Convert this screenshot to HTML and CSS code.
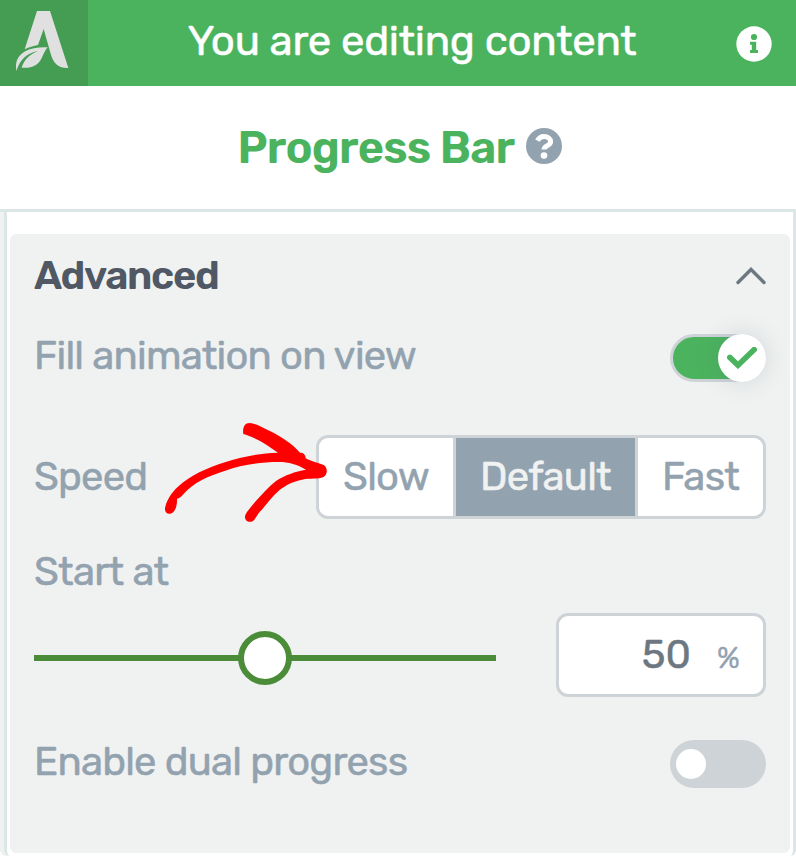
FILE: index.html
```html
<!DOCTYPE html>
<html lang="en">
<head>
  <meta charset="utf-8">
  <title>Progress Bar</title>
  <link rel="stylesheet" href="styles.css">
</head>
<body>
  <div class="header">
    <div class="logo">
      <svg width="88" height="86" viewBox="0 0 264 258" fill="#e0e0e0">
        <path d="M111 33H150L205 204C176 205 160 190 152 161L131 87L114 135C100 138 87 141 74 148Z"/>
        <path d="M49 213C45 184 53 168 73 155C93 144 117 141 143 142C135 151 131 162 125 174C114 198 92 206 65 203C72 180 86 165 114 153C80 160 60 178 49 213Z"/>
      </svg>
    </div>
    <div class="header-title"><span>You are editing content</span></div>
    <svg class="info" width="36" height="36" viewBox="0 0 36 36">
      <circle cx="18" cy="18" r="17.7" fill="#fff"/>
      <circle cx="18" cy="11" r="3.1" fill="#4bb35e"/>
      <path d="M14 15.7h6.2v8.2H22v3h-8v-3h1.8v-5.2H14z" fill="#4bb35e"/>
    </svg>
  </div>

  <div class="title">
    <h1>Progress Bar</h1>
    <svg width="36" height="36" viewBox="0 0 36 36">
      <circle cx="18" cy="18" r="18" fill="#93a2af"/>
      <path d="M11.4 12.6C12.8 9.8 15.1 8.4 18 8.4C21.6 8.4 24.6 10.6 24.6 13.7C24.6 17.8 18 17.4 18 21.6" fill="none" stroke="#fff" stroke-width="5"/>
      <circle cx="18" cy="27.5" r="3.3" fill="#fff"/>
    </svg>
  </div>

  <div class="panel">
    <div class="section">
      <div class="section-head">
        <h2>Advanced</h2>
        <svg width="32" height="20" viewBox="0 0 32 20">
          <path d="M3 16.5L16 3.5L29 16.5" fill="none" stroke="#6d7782" stroke-width="3.4" stroke-linecap="round"/>
        </svg>
      </div>

      <div class="row row-fill">
        <span class="label label-fill">Fill animation on view</span>
        <div class="toggle on">
          <div class="knob">
            <svg width="30" height="22" viewBox="0 0 30 22">
              <path d="M2.8 10.4L11 18.2L27.2 2.6" fill="none" stroke="#4bb35e" stroke-width="5.6" stroke-linecap="round"/>
            </svg>
          </div>
        </div>
      </div>

      <div class="row row-speed">
        <span class="label label-speed">Speed</span>
        <div class="button-group">
          <div class="option slow"><span>Slow</span></div>
          <div class="option default active"><span>Default</span></div>
          <div class="option fast"><span>Fast</span></div>
        </div>
        <svg class="arrow" width="200" height="130" viewBox="0 0 600 390" fill="#f00">
          <path d="M280 72C277 54 283 39 299 39C318 40 336 52 355 61C392 79 428 102 450 128C461 127 467 135 467 145C487 155 509 160 522 166C534 174 533 195 519 202C506 208 482 204 456 209C430 214 405 226 388 241C366 260 351 282 334 301C323 309 317 331 304 335C290 338 282 326 286 315C293 300 305 290 315 276C337 253 355 230 379 212C405 196 435 184 468 179C443 164 416 156 386 156C329 156 274 165 226 182C177 197 129 218 100 253C94 261 88 265 81 266C82 284 77 307 61 311C49 313 42 302 46 290C51 270 65 247 83 231C121 196 170 174 227 156C278 140 330 129 384 128C355 108 319 83 280 72Z"/>
        </svg>
      </div>

      <div class="label label-start">Start at</div>

      <div class="row row-start">
        <div class="slider"><div class="handle"></div></div>
        <div class="number"><span class="value">50</span><span class="unit">%</span></div>
      </div>

      <div class="row row-dual">
        <span class="label label-dual">Enable dual progress</span>
        <div class="toggle"><div class="knob"></div></div>
      </div>
    </div>
  </div>
</body>
</html>
```
FILE: styles.css
```css
* {
  box-sizing: border-box;
}

body {
  margin: 0;
  height: 856px;
  overflow: hidden;
  font-family: Rubik, Roboto, sans-serif;
  font-size: 40px;
  line-height: 48px;
  letter-spacing: -0.8px;
  -webkit-text-stroke: 0.5px;
  color: #93a2af;
  background: #fff;
}

svg {
  display: block;
  flex: none;
}

h1, h2 {
  margin: 0;
  font-weight: 600;
  white-space: nowrap;
  -webkit-text-stroke: 0;
}

.header {
  display: flex;
  align-items: center;
  height: 86px;
  padding-right: 24px;
  background: #4bb35e;
  color: #fff;
}

.logo {
  width: 88px;
  height: 86px;
  background: #459d53;
}

.header-title {
  flex: 1;
  padding-bottom: 4px;
  text-align: center;
  font-size: 42px;
  letter-spacing: -0.3px;
  white-space: nowrap;
}

.info {
  margin-top: 2px;
}

.title {
  display: flex;
  align-items: center;
  justify-content: center;
  gap: 12px;
  height: 126px;
  padding: 0 0 3px 4px;
  border-bottom: 3px solid #dce6e7;
}

.title h1 {
  padding-top: 4px;
  font-size: 45px;
  letter-spacing: -0.75px;
  color: #4bb35e;
}

.panel {
  height: 644px;
  padding: 22px 3px 3px;
  border: 3px solid #dce6e7;
  border-width: 0 3px;
  border-radius: 0 0 6px 6px;
  margin-left: 4px;
  box-shadow: -4px 0 0 #f0f2f1;
}

.section {
  height: 619px;
  padding: 0 24px;
  border-radius: 6px;
  background: #f0f2f1;
}

.section-head {
  display: flex;
  align-items: center;
  justify-content: space-between;
  height: 84px;
}

.section-head h2 {
  font-size: 40px;
  letter-spacing: -1.35px;
  color: #4f5864;
}

.section-head svg {
  margin-right: -1px;
}

.row {
  display: flex;
  align-items: center;
  justify-content: space-between;
}

.label {
  white-space: nowrap;
}

.row-fill {
  height: 48px;
  margin-top: 16px;
}

.row-fill .label {
  padding-bottom: 4px;
}

.toggle {
  display: flex;
  align-items: center;
  width: 96px;
  height: 48px;
  padding-left: 6px;
  border-radius: 24px;
  background: #cdd3d7;
}

.knob {
  width: 30px;
  height: 30px;
  border-radius: 50%;
  background: #fff;
}

.toggle.on {
  justify-content: flex-end;
  padding: 0;
  border: 3px solid #cdd3d7;
  background: #4bb35e;
}

.toggle.on .knob {
  display: flex;
  align-items: center;
  justify-content: center;
  flex: none;
  width: 48px;
  height: 48px;
  margin-right: -3px;
  box-shadow: 0 0 24px rgba(79, 88, 120, 0.18);
}

.row-speed {
  position: relative;
  height: 84px;
  margin-top: 53px;
}

.button-group {
  display: flex;
  width: 450px;
  height: 84px;
  border: 3px solid #cdd3d7;
  border-radius: 12px;
  background: #fff;
  overflow: hidden;
}

.option {
  display: flex;
  align-items: center;
  justify-content: center;
  border-left: 3px solid #cdd3d7;
}

.option.slow {
  width: 134px;
  border-left: 0;
}

.option.default {
  width: 182px;
}

.option.fast {
  width: 128px;
}

.option.active {
  background: #93a2af;
  color: #f0f2f1;
}

/* pointer drawn over the Slow option */
.arrow {
  position: absolute;
  left: 116px;
  top: -25px;
}

.label-start {
  margin-top: 29px;
}

.row-start {
  height: 84px;
  margin-top: 17px;
}

.slider {
  display: flex;
  align-items: center;
  justify-content: center;
  width: 462px;
  height: 6px;
  margin-top: 6px;
  background: #4a8c37;
}

.handle {
  flex: none;
  width: 54px;
  height: 54px;
  border: 6px solid #4a8c37;
  border-radius: 50%;
  background: #fff;
}

.number {
  display: flex;
  align-items: baseline;
  justify-content: flex-end;
  width: 210px;
  height: 84px;
  padding: 15px 24px 0 0;
  border: 3px solid #cdd3d7;
  border-radius: 12px;
  background: #fff;
}

.value {
  letter-spacing: 0;
  color: #6d7782;
}

.unit {
  margin-left: 26px;
  font-size: 30px;
  -webkit-text-stroke: 0.3px;
}

.row-dual {
  height: 48px;
  margin-top: 43px;
}

.row-dual .label {
  padding-bottom: 4px;
}
```
